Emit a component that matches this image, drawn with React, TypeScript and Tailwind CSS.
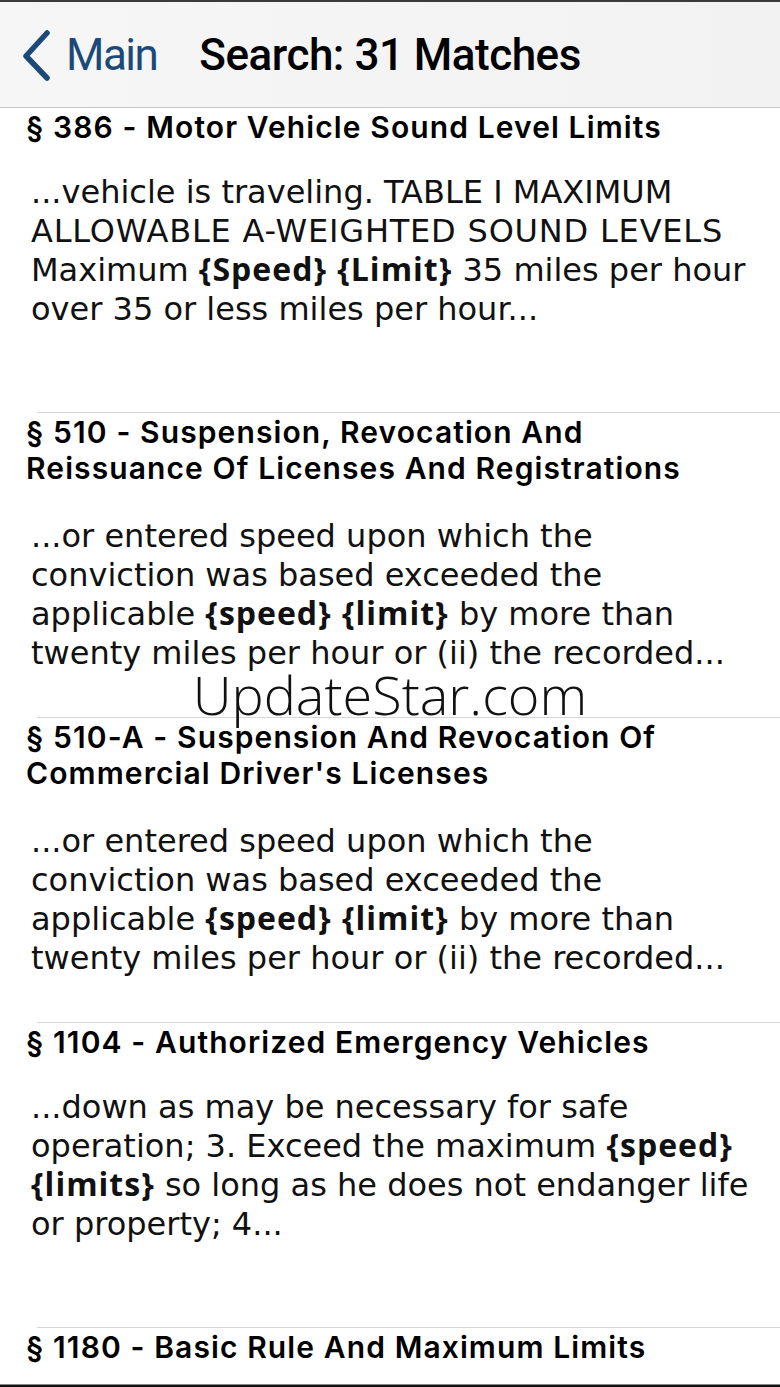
import React from "react";

type Item = { title: string; body: React.ReactNode; two?: boolean };

const B = ({ children }: { children: React.ReactNode }) => (
  <b className="font-bold tracking-[1px] leading-none" style={{ fontFamily: "'Open Sans', sans-serif" }}>{children}</b>
);

const items: Item[] = [
  {
    title: "§ 386 - Motor Vehicle Sound Level Limits",
    body: (
      <>
        ...vehicle is traveling. TABLE I MAXIMUM <span className="tracking-[0.8px]">ALLOWABLE A-WEIGHTED SOUND LEVELS</span> Maximum <B>{"{Speed}"}</B> <B>{"{Limit}"}</B> 35 miles per hour over 35 or less miles per hour...
      </>
    ),
  },
  {
    title: "§ 510 - Suspension, Revocation And Reissuance Of Licenses And Registrations",
    two: true,
    body: (
      <>
        ...or entered speed upon which the conviction was based exceeded the applicable <B>{"{speed}"}</B> <B>{"{limit}"}</B> by more than twenty miles per hour or (ii) the recorded...
      </>
    ),
  },
  {
    title: "§ 510-A - Suspension And Revocation Of Commercial Driver's Licenses",
    two: true,
    body: (
      <>
        ...or entered speed upon which the conviction was based exceeded the applicable <B>{"{speed}"}</B> <B>{"{limit}"}</B> by more than twenty miles per hour or (ii) the recorded...
      </>
    ),
  },
  {
    title: "§ 1104 - Authorized Emergency Vehicles",
    body: (
      <>
        ...down as may be necessary for safe operation; 3. Exceed the maximum <B>{"{speed}"}</B> <B>{"{limits}"}</B> so long as he does not endanger life or property; 4...
      </>
    ),
  },
  {
    title: "§ 1180 - Basic Rule And Maximum Limits",
    body: null,
  },
];

export default function App() {
  return (
    <div className="w-[780px] h-[1387px] overflow-hidden bg-white flex flex-col relative" style={{ fontFamily: "Inter, 'Liberation Sans', sans-serif" }}>
      <div className="h-[2px] bg-[#3a3a3a] shrink-0" />
      <div className="h-[106px] shrink-0 bg-gradient-to-r from-[#f6f6f6] to-[#f2f2f2] border-b border-[#c8c8c8] flex items-center">
        <svg width="36" height="52" viewBox="0 0 36 52" className="ml-[18px]">
          <path d="M29 4 L8 27 L29 49" fill="none" stroke="#1c4a78" strokeWidth="5.5" strokeLinecap="round" strokeLinejoin="round" />
        </svg>
        <span className="ml-[12px] text-[44px] leading-none text-[#1c4a78] tracking-[-1.5px]" style={{ fontFamily: "Roboto, sans-serif" }}>Main</span>
        <span className="ml-[42px] text-[44px] leading-none font-medium text-black tracking-[-0.5px]" style={{ fontFamily: "Roboto, sans-serif" }}>Search: 31 Matches</span>
      </div>
      <div className="flex-1 flex flex-col">
        {items.map((it, i) => (
          <div key={i} className={i === 0 ? "h-[304px] shrink-0" : "h-[305px] shrink-0 border-t border-[#d6d6d6] ml-[37px]"}>
            <div className={i === 0 ? "" : "-ml-[37px]"}>
              <div className="pl-[26px] pr-[40px] pt-[1px] text-[30px] leading-[36px] font-semibold text-black tracking-[1.1px]">{it.title}</div>
              {it.body && (
                <div className={(it.two ? "mt-[31px]" : "mt-[28px]") + " pl-[31px] pr-[28px] text-[32px] leading-[39px] text-[#111]"} style={{ fontFamily: "'DejaVu Sans', sans-serif" }}>
                  {it.body}
                </div>
              )}
            </div>
          </div>
        ))}
      </div>
      <div className="absolute left-0 right-0 top-[654px] text-center text-[54px] text-[#111] font-light pointer-events-none" style={{ fontFamily: "'Open Sans', sans-serif" }}>UpdateStar.com</div>
      <div className="absolute left-0 right-0 bottom-0 h-[3px] bg-[#111] border-t border-[#888]" />
    </div>
  );
}
